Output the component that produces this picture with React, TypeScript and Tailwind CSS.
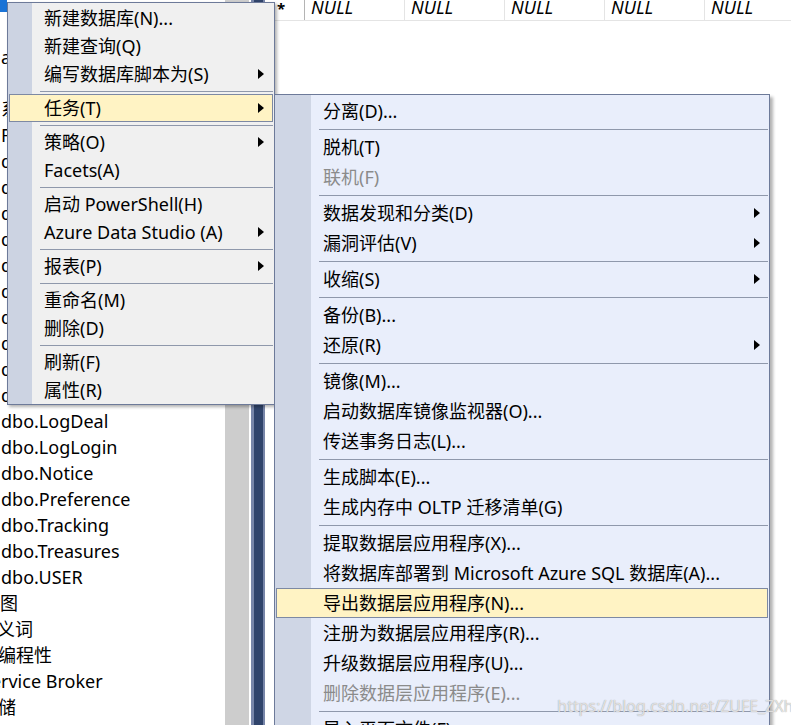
import React from 'react';

type Entry = { label?: string; arrow?: boolean; disabled?: boolean; active?: boolean; sep?: boolean };

const mainItems: Entry[] = [
  { label: '新建数据库(N)...' },
  { label: '新建查询(Q)' },
  { label: '编写数据库脚本为(S)', arrow: true },
  { sep: true },
  { label: '任务(T)', arrow: true, active: true },
  { sep: true },
  { label: '策略(O)', arrow: true },
  { label: 'Facets(A)' },
  { sep: true },
  { label: '启动 PowerShell(H)' },
  { label: 'Azure Data Studio (A)', arrow: true },
  { sep: true },
  { label: '报表(P)', arrow: true },
  { sep: true },
  { label: '重命名(M)' },
  { label: '删除(D)' },
  { sep: true },
  { label: '刷新(F)' },
  { label: '属性(R)' },
];

const taskItems: Entry[] = [
  { label: '分离(D)...' },
  { sep: true },
  { label: '脱机(T)' },
  { label: '联机(F)', disabled: true },
  { sep: true },
  { label: '数据发现和分类(D)', arrow: true },
  { label: '漏洞评估(V)', arrow: true },
  { sep: true },
  { label: '收缩(S)', arrow: true },
  { sep: true },
  { label: '备份(B)...' },
  { label: '还原(R)', arrow: true },
  { sep: true },
  { label: '镜像(M)...' },
  { label: '启动数据库镜像监视器(O)...' },
  { label: '传送事务日志(L)...' },
  { sep: true },
  { label: '生成脚本(E)...' },
  { label: '生成内存中 OLTP 迁移清单(G)' },
  { sep: true },
  { label: '提取数据层应用程序(X)...' },
  { label: '将数据库部署到 Microsoft Azure SQL 数据库(A)...' },
  { label: '导出数据层应用程序(N)...', active: true },
  { label: '注册为数据层应用程序(R)...' },
  { label: '升级数据层应用程序(U)...' },
  { label: '删除数据层应用程序(E)...', disabled: true },
  { sep: true },
  { label: '导入平面文件(F)...' },
];

// rows hidden behind the context menu only show their first few pixels
const hiddenRows = ['', 'a', '', '系统表', 'FileTables', 'dbo.Account', 'dbo.Bag', 'dbo.Card', 'dbo.Friend', 'dbo.Guild', 'dbo.Hero', 'dbo.Item', 'dbo.LogBuy', 'dbo.LogCard', 'dbo.LogChat'];

const treeRows: { text: string; shift?: string }[] = [
  { text: 'dbo.LogDeal' },
  { text: 'dbo.LogLogin' },
  { text: 'dbo.Notice' },
  { text: 'dbo.Preference' },
  { text: 'dbo.Tracking' },
  { text: 'dbo.Treasures' },
  { text: 'dbo.USER' },
  { text: '视图', shift: '-ml-[19px]' },
  { text: '同义词', shift: '-ml-[22px]' },
  { text: '可编程性', shift: '-ml-[21px]' },
  { text: 'Service Broker', shift: '-ml-[20px]' },
  { text: '存储', shift: '-ml-[21px]' },
];

const Arrow = () => (
  <span className="ml-auto w-0 h-0 border-l-[6px] border-l-black border-y-[5px] border-y-transparent" />
);

const App: React.FC = () => {
  return (
    <div
      className="relative w-[791px] h-[725px] overflow-hidden bg-white flex text-black"
      style={{ fontFamily: '"Noto Sans", "Noto Sans CJK SC", sans-serif' }}
    >
      {/* object explorer tree */}
      <div className="w-[225px] shrink-0 overflow-hidden text-[18px] whitespace-nowrap">
        <div className="h-[18px]">
          <div className="h-[12px] w-[7px] bg-[#1a73d6]" />
        </div>
        {hiddenRows.map((t, i) => (
          <div key={i} className="h-[26px] flex items-center pl-[1px]">
            <span className="w-[6px] overflow-hidden">{t}</span>
          </div>
        ))}
        {treeRows.map((r, i) => (
          <div key={i} className="h-[26px] flex items-center pl-[1px]">
            <span className={r.shift}>{r.text}</span>
          </div>
        ))}
      </div>

      {/* scrollbar + splitter */}
      <div className="w-[24px] shrink-0 bg-[#cdcdcd]" />
      <div className="w-[2px] shrink-0" />
      <div className="w-[14px] shrink-0 bg-[#30446b] border-l-[3px] border-r-[2px] border-[#7886a9]" />
      <div className="w-[9px] shrink-0" />

      {/* results grid */}
      <div className="flex-1 min-w-0">
        <div className="flex h-[21px] border-b border-[#e4e4e4] overflow-hidden">
          <div className="w-[31px] shrink-0 border-r border-[#b4b4b4] pl-[3px] text-[15px] font-bold leading-[16px]">*</div>
          {[0, 1, 2, 3, 4].map((i) => (
            <div
              key={i}
              className="w-[100px] shrink-0 border-r border-[#e4e4e4] pl-[6px] flex items-end text-[18px] italic leading-[26px]"
            >
              NULL
            </div>
          ))}
        </div>
      </div>

      {/* database context menu */}
      <div className="absolute left-[7px] top-[2px] w-[268px] h-[403px] border border-[#6d7a99] bg-[linear-gradient(to_right,#ccd3e2_24px,#f0f0f0_24px)] shadow-[2px_2px_3px_rgba(0,0,0,0.3)] pt-[1px] px-[1px] text-[18px] whitespace-nowrap">
        {mainItems.map((it, i) =>
          it.sep ? (
            <div key={i} className="h-[6px] flex items-center pl-[31px]">
              <div className="h-px w-full bg-[#8f98ab]" />
            </div>
          ) : (
            <div
              key={i}
              className={`h-[28px] flex items-center pl-[34px] pr-[8px] border ${
                it.active ? 'bg-[#fff3c4] border-[#7d89a3]' : 'border-transparent'
              }`}
            >
              <span>{it.label}</span>
              {it.arrow && <Arrow />}
            </div>
          )
        )}
      </div>

      {/* tasks submenu */}
      <div className="absolute left-[274px] top-[94px] w-[496px] border border-[#6d7a99] bg-[linear-gradient(to_right,#cfd6e5_36px,#e9eefb_36px)] shadow-[3px_3px_3px_rgba(0,0,0,0.3)] pt-[1px] px-[1px] text-[18px] whitespace-nowrap">
        {taskItems.map((it, i) =>
          it.sep ? (
            <div key={i} className="h-[6px] flex items-center pl-[43px]">
              <div className="h-px w-full bg-[#8f98ab]" />
            </div>
          ) : (
            <div
              key={i}
              className={`h-[30px] flex items-center pl-[46px] pr-[7px] border ${
                it.active ? 'bg-[#fff3c4] border-[#7d89a3]' : 'border-transparent'
              } ${it.disabled ? 'text-[#8b8b8b]' : ''}`}
            >
              <span>{it.label}</span>
              {it.arrow && <Arrow />}
            </div>
          )
        )}
      </div>

      {/* blog watermark */}
      <div className="absolute left-[557px] top-[694px] text-[16px] text-white/70 [text-shadow:0_0_1px_#8a8a8a] whitespace-nowrap">
        https://blog.csdn.net/ZUFE_ZXh
      </div>
    </div>
  );
};

export default App;
